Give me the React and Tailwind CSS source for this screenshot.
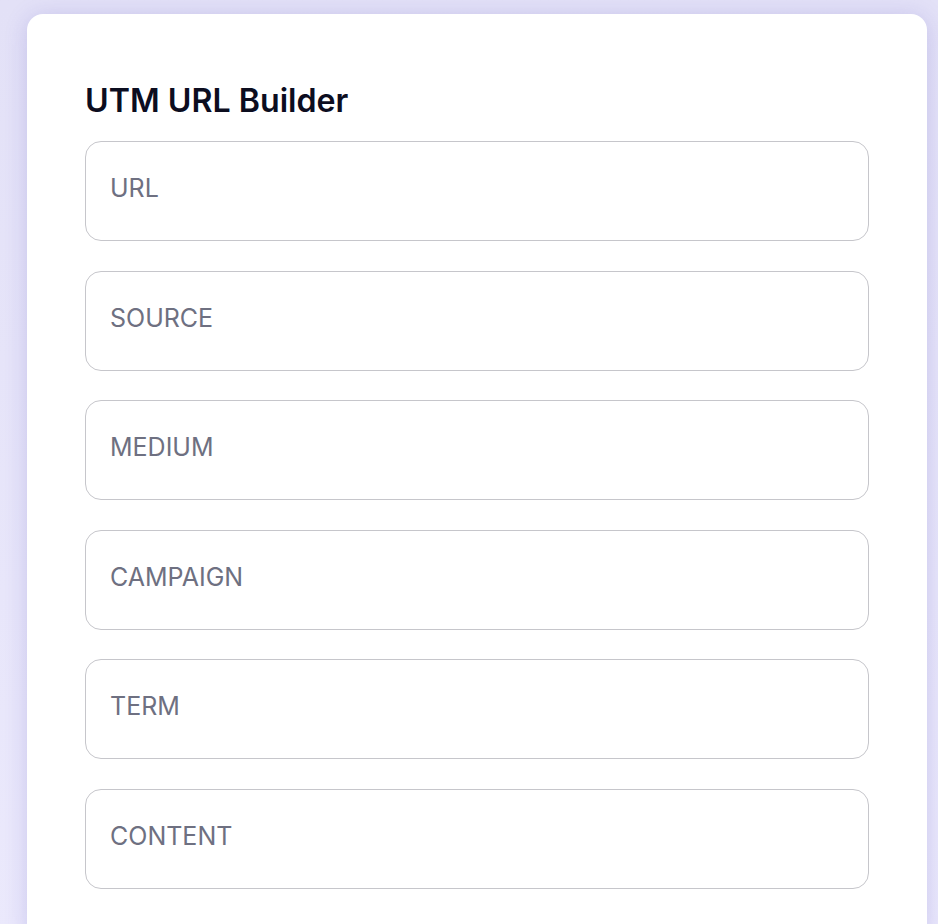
const fields = ['URL', 'SOURCE', 'MEDIUM', 'CAMPAIGN', 'TERM', 'CONTENT'];

export default function App() {
  return (
    <div
      className="min-h-[924px] overflow-hidden bg-gradient-to-b from-[#e3e1f7] to-[#ebe9fc] pt-[14px] pl-[27px]"
      style={{ fontFamily: 'Inter, "Noto Sans", sans-serif' }}
    >
      <div className="w-[900px] min-h-[930px] rounded-2xl bg-white px-[58px] pt-[69px] pb-10 shadow-[0_2px_22px_rgba(90,80,190,0.22)]">
        <h1 className="text-[32.2px] leading-9 font-semibold text-[#0c0d1f]">UTM URL Builder</h1>

        <div className="mt-[22px] flex flex-col gap-[29.6px]">
          {fields.map((f) => (
            <input
              key={f}
              type="text"
              placeholder={f}
              className="h-[100px] w-full rounded-2xl border border-[#c6c6cb] bg-white px-6 pt-0 pb-[6px] text-[25px] text-[#0c0d1f] outline-none placeholder:text-[#6e7081]"
            />
          ))}
        </div>
      </div>
    </div>
  );
}
